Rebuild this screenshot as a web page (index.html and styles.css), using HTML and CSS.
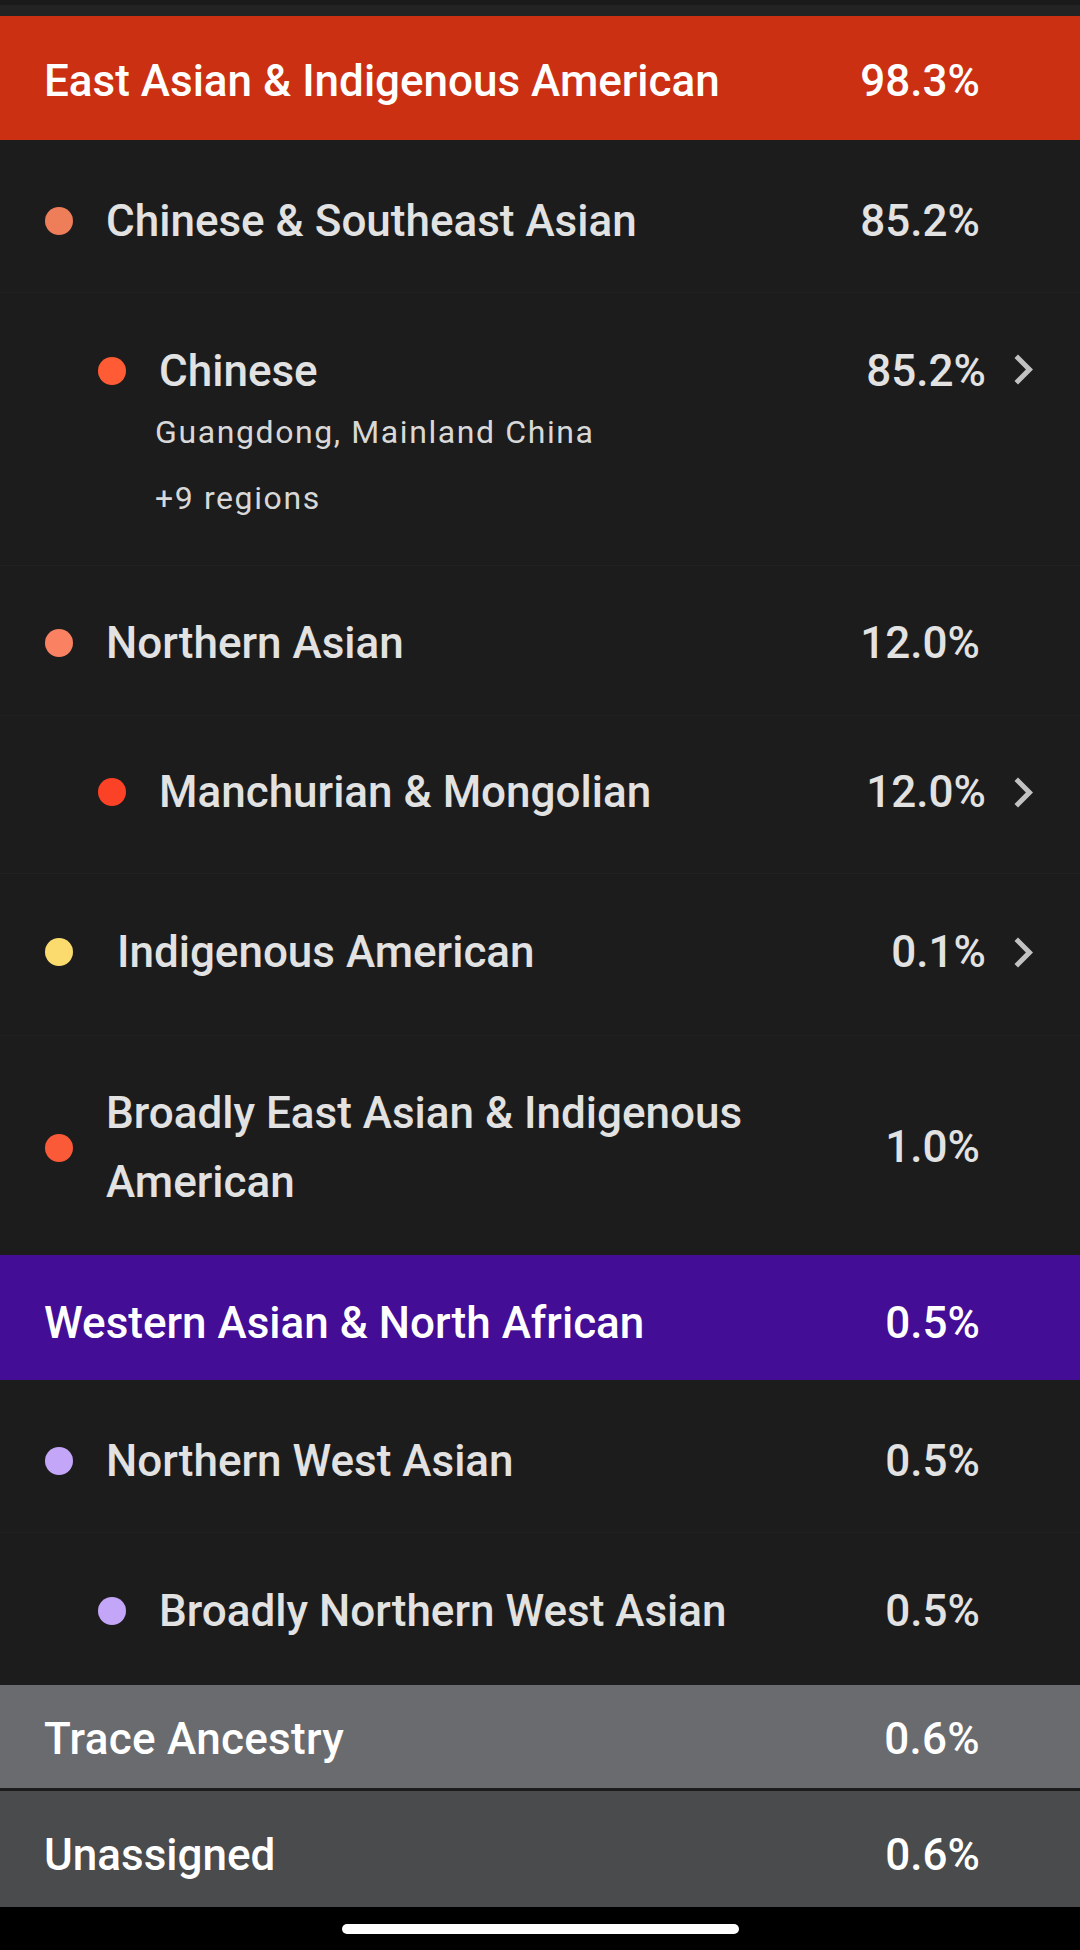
FILE: index.html
```html
<!DOCTYPE html>
<html lang="en">
<head>
    <meta charset="UTF-8">
    <meta name="viewport" content="width=device-width, initial-scale=1.0">
    <title>Ancestry Composition</title>
    <link rel="stylesheet" href="styles.css">
</head>
<body>
    <div class="top-edge"></div>

    <section class="group">
        <div class="group-head east">
            <span class="label">East Asian &amp; Indigenous American</span>
            <span class="pct">98.3%</span>
        </div>

        <div class="row first">
            <span class="dot" style="background-color: #ee7d5a;"></span>
            <span class="label">Chinese &amp; Southeast Asian</span>
            <span class="pct">85.2%</span>
        </div>

        <div class="row sub detail linked">
            <span class="dot" style="background-color: #ff5c35;"></span>
            <div class="label">
                Chinese
                <div class="regions">
                    <div>Guangdong, Mainland China</div>
                    <div>+9 regions</div>
                </div>
            </div>
            <span class="pct">85.2%</span>
            <svg class="chev" viewBox="8 6 8 12"><path d="M10 6L8.59 7.41 13.17 12l-4.58 4.59L10 18l6-6z"/></svg>
        </div>

        <div class="row short">
            <span class="dot" style="background-color: #fa8262;"></span>
            <span class="label">Northern Asian</span>
            <span class="pct">12.0%</span>
        </div>

        <div class="row sub linked mid">
            <span class="dot" style="background-color: #fc4226;"></span>
            <span class="label">Manchurian &amp; Mongolian</span>
            <span class="pct">12.0%</span>
            <svg class="chev" viewBox="8 6 8 12"><path d="M10 6L8.59 7.41 13.17 12l-4.58 4.59L10 18l6-6z"/></svg>
        </div>

        <div class="row linked tall">
            <span class="dot" style="background-color: #fcdb6e;"></span>
            <span class="label spaced"> Indigenous American</span>
            <span class="pct">0.1%</span>
            <svg class="chev" viewBox="8 6 8 12"><path d="M10 6L8.59 7.41 13.17 12l-4.58 4.59L10 18l6-6z"/></svg>
        </div>

        <div class="row wrap">
            <span class="dot" style="background-color: #fa5a38;"></span>
            <span class="label">Broadly East Asian &amp; Indigenous American</span>
            <span class="pct">1.0%</span>
        </div>
    </section>

    <section class="group">
        <div class="group-head west">
            <span class="label">Western Asian &amp; North African</span>
            <span class="pct">0.5%</span>
        </div>

        <div class="row first">
            <span class="dot" style="background-color: #c4a6f8;"></span>
            <span class="label">Northern West Asian</span>
            <span class="pct">0.5%</span>
        </div>

        <div class="row sub">
            <span class="dot" style="background-color: #c4a6f8;"></span>
            <span class="label">Broadly Northern West Asian</span>
            <span class="pct">0.5%</span>
        </div>
    </section>

    <div class="group-head trace">
        <span class="label">Trace Ancestry</span>
        <span class="pct">0.6%</span>
    </div>
    <div class="group-head unassigned">
        <span class="label">Unassigned</span>
        <span class="pct">0.6%</span>
    </div>

    <div class="nav-bar">
        <div class="home-pill"></div>
    </div>
</body>
</html>
```

FILE: styles.css
```css
:root {
    --bg-color: #1c1c1c;
    --line-color: #212121;
    --text-color: #e2e2e2;
    --east-color: #cc3012;
    --west-color: #430d96;
    --trace-color: #6a6b6f;
    --unassigned-color: #4a4b4d;
}

body {
    margin: 0;
    width: 1080px;
    height: 1950px;
    overflow: hidden;
    background-color: var(--bg-color);
    font-family: Roboto, 'Noto Sans', sans-serif;
    color: var(--text-color);
}

.top-edge {
    height: 11px;
    border-top: 5px solid #1a1a1a;
    background-color: #232323;
}

.group-head {
    display: flex;
    align-items: center;
    height: 124px;
    padding: 5px 0 0 44px;
    box-sizing: border-box;
    color: #ffffff;
    font-size: 44px;
    font-weight: 500;
    line-height: 56px;
}

.group-head .label {
    flex: 1;
}

.group-head .pct {
    width: 200px;
    margin-right: 100px;
    text-align: right;
}

.east {
    background-color: var(--east-color);
}

.west {
    height: 125px;
    padding-top: 10px;
    background-color: var(--west-color);
}

.trace {
    height: 103px;
    margin-top: 1px;
    letter-spacing: 0.3px;
    background-color: var(--trace-color);
}

.unassigned {
    height: 116px;
    margin-top: 3px;
    padding-top: 12px;
    background-color: var(--unassigned-color);
}

.row {
    display: flex;
    align-items: center;
    height: 152px;
    padding: 4px 47px 0 45px;
    box-sizing: border-box;
    border-top: 1px solid var(--line-color);
    font-size: 44px;
    font-weight: 500;
    line-height: 56px;
}

.row.first {
    padding-top: 9px;
    border-top: none;
}

.row.sub {
    padding-left: 98px;
}

.row.short {
    height: 150px;
}

.row.mid {
    height: 158px;
    padding-top: 0;
    padding-bottom: 5px;
}

.row.tall {
    height: 162px;
    padding-top: 0;
    padding-bottom: 5px;
}

.row.wrap {
    height: 220px;
    line-height: 69px;
}

.row.detail {
    height: 273px;
    align-items: flex-start;
    padding-top: 50px;
    padding-bottom: 0;
}

.dot {
    flex: none;
    width: 28px;
    height: 28px;
    border-radius: 50%;
    margin-right: 33px;
}

.row.detail .dot {
    margin-top: 14px;
}

.label {
    flex: 1;
}

.label.spaced {
    white-space: pre;
}

.regions {
    margin-top: 0;
    margin-left: -4px;
    font-size: 32px;
    font-weight: 400;
    line-height: 66px;
    letter-spacing: 1.6px;
    color: #d8d8d8;
}

.pct {
    flex: none;
    width: 200px;
    margin-right: 53px;
    text-align: right;
}

.row.linked .pct {
    margin-right: 0;
}

.chev {
    flex: none;
    width: 20px;
    height: 31px;
    margin-left: 27px;
    fill: #c2c2c2;
}

.row.detail .chev {
    margin-top: 11px;
}

.nav-bar {
    display: flex;
    justify-content: center;
    height: 44px;
    padding-top: 17px;
    box-sizing: border-box;
    background-color: #000000;
}

.home-pill {
    width: 397px;
    height: 10px;
    border-radius: 5px;
    background-color: #ffffff;
}
```
